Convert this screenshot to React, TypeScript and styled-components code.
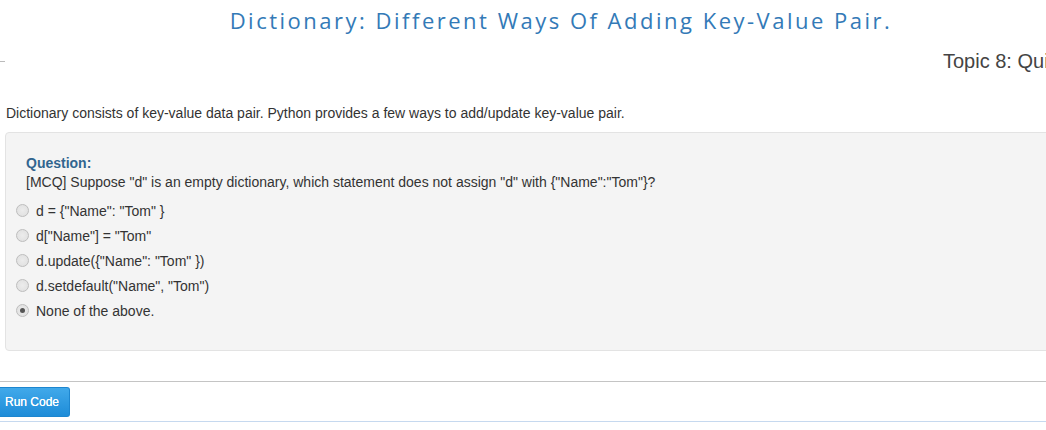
import React from "react";
import styled, { createGlobalStyle } from "styled-components";

const Global = createGlobalStyle`
  html, body { margin: 0; padding: 0; background: #fff; overflow: hidden; }
  body { font-family: "Liberation Sans", Arial, sans-serif; color: #333; }
`;

const Page = styled.div`
  width: 1122px;
`;

const Title = styled.h1`
  margin: 0;
  padding-top: 5px;
  font-family: "Open Sans", "DejaVu Sans", sans-serif;
  font-weight: 400;
  font-size: 22px;
  line-height: 30px;
  letter-spacing: 2.5px;
  color: #337ab7;
  text-align: center;
`;

const TopicRow = styled.div`
  display: flex;
  align-items: center;
  margin-top: 11px;
  height: 30px;
`;

const LeftRule = styled.div`
  width: 5px;
  height: 1px;
  background: #bbb;
`;

const TopicTitle = styled.h2`
  margin: 0 0 0 938px;
  font-weight: 400;
  font-size: 20px;
  line-height: 30px;
  color: #444;
  white-space: nowrap;
`;

const Intro = styled.p`
  margin: 28px 0 0 6px;
  font-size: 14px;
  line-height: 19px;
`;

const Well = styled.div`
  margin: 9px 0 0 5px;
  padding: 18px 20px 27px;
  background: #f4f4f4;
  border: 1px solid #e3e3e3;
  border-radius: 4px;
`;

const QLabel = styled.div`
  font-size: 14px;
  font-weight: bold;
  color: #31658f;
  line-height: 19px;
  margin-top: 3px;
`;

const QText = styled.div`
  font-size: 14px;
  line-height: 19px;
`;

const Options = styled.div`
  display: flex;
  flex-direction: column;
  margin: 6px 0 0 -10px;
`;

const Option = styled.label`
  display: flex;
  align-items: center;
  height: 25px;
  font-size: 14px;
`;

const Radio = styled.span<{ $checked?: boolean }>`
  box-sizing: border-box;
  width: 13px;
  height: 13px;
  border-radius: 50%;
  border: 1px solid #bdbdbd;
  background: radial-gradient(circle, #ececec 0%, #dedede 100%);
  margin-right: 7px;
  display: flex;
  align-items: center;
  justify-content: center;
  &::after {
    content: "";
    display: ${(p) => (p.$checked ? "block" : "none")};
    width: 5px;
    height: 5px;
    border-radius: 50%;
    background: #555;
  }
`;

const Divider = styled.div<{ $color: string }>`
  height: 1px;
  background: ${(p) => p.$color};
`;

const ButtonBar = styled.div`
  padding: 5px 0 4px;
`;

const RunButton = styled.button`
  display: block;
  height: 30px;
  width: 70px;
  margin: 0;
  border: 1px solid #1d86cf;
  border-left: none;
  border-radius: 0 3px 3px 0;
  background: linear-gradient(#41a9ea, #1e8cd8);
  color: #fff;
  font-family: "Liberation Sans", Arial, sans-serif;
  font-size: 12px;
  font-weight: normal;
  text-align: left;
  padding: 0 0 0 5px;
  text-shadow: 0 0 0.4px #fff;
`;

const options = [
  'd = {"Name": "Tom" }',
  'd["Name"] = "Tom"',
  'd.update({"Name": "Tom" })',
  'd.setdefault("Name", "Tom")',
  "None of the above.",
];

export default function App() {
  return (
    <Page>
      <Global />
      <Title>Dictionary: Different Ways Of Adding Key-Value Pair.</Title>
      <TopicRow>
        <LeftRule />
        <TopicTitle>Topic 8: Quiz</TopicTitle>
      </TopicRow>
      <Intro>
        Dictionary consists of key-value data pair. Python provides a few ways to add/update key-value pair.
      </Intro>
      <Well>
        <QLabel>Question:</QLabel>
        <QText>
          [MCQ] Suppose "d" is an empty dictionary, which statement does not assign "d" with {'{"Name":"Tom"}'}?
        </QText>
        <Options>
          {options.map((o, i) => (
            <Option key={i}>
              <Radio $checked={i === 4} />
              {o}
            </Option>
          ))}
        </Options>
      </Well>
      <Divider $color="#c4c4c4" style={{ marginTop: 30 }} />
      <ButtonBar>
        <RunButton>Run Code</RunButton>
      </ButtonBar>
      <Divider $color="#c6d9ef" />
    </Page>
  );
}
